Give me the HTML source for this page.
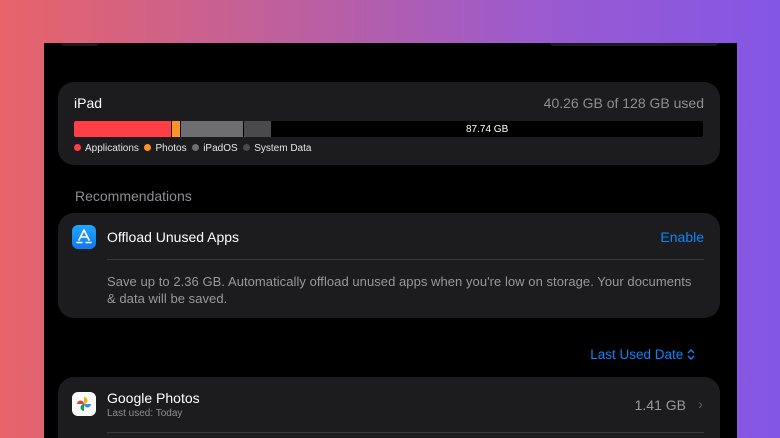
<!DOCTYPE html><html><head><style>
html,body{margin:0;width:780px;height:438px;overflow:hidden}
body{background:linear-gradient(90deg,#e8646a 0%,#c0609a 35%,#9a5ad0 70%,#8456e6 100%);font-family:"Liberation Sans",sans-serif;position:relative}
.p{position:absolute;left:44px;top:43px;width:693px;height:395px;background:#000;overflow:hidden}
.c{position:absolute;left:14px;width:662px;background:#1c1c1e;border-radius:16px}
.t{position:absolute;white-space:nowrap}
.dot{display:inline-block;width:7px;height:7px;border-radius:50%;margin-right:4px;vertical-align:-0px}
</style></head><body>
<div class="p">
<div style="position:absolute;left:16px;top:-6px;width:40px;height:9px;border-radius:8px;background:#1c1c1e"></div>
<div style="position:absolute;left:505px;top:-6px;width:170px;height:9px;border-radius:8px;background:#1c1c1e"></div>
<div class="c" style="top:39px;height:83px">
<div class="t" style="left:16px;top:13px;color:#fff;font-size:14px">iPad</div>
<div class="t" style="right:16px;top:13px;color:#8e8e93;font-size:14px">40.26 GB of 128 GB used</div>
<div style="position:absolute;left:16px;top:39px;width:629px;height:16px;background:#000;border-radius:2px;overflow:hidden">
<div style="position:absolute;left:0;width:97px;height:16px;background:#fe3f45"></div>
<div style="position:absolute;left:98px;width:8px;height:16px;background:#fe9426"></div>
<div style="position:absolute;left:107px;width:62px;height:16px;background:#6e6e71"></div>
<div style="position:absolute;left:170px;width:27px;height:16px;background:#4a4a4d"></div>
<div class="t" style="left:392px;top:3px;color:#fff;font-size:10px">87.74 GB</div>
</div>
<div class="t" style="left:16px;top:61px;color:#e5e5ea;font-size:10px"><span class="dot" style="background:#fe3f45"></span>Applications&nbsp; <span class="dot" style="background:#fe9426"></span>Photos&nbsp; <span class="dot" style="background:#6e6e71"></span>iPadOS&nbsp; <span class="dot" style="background:#4a4a4d"></span>System Data</div>
</div>
<div class="t" style="left:31px;top:145px;color:#8e8e93;font-size:14px">Recommendations</div>
<div class="c" style="top:170px;height:105px">
<div style="position:absolute;left:14px;top:12px;width:24px;height:24px;border-radius:6px;background:linear-gradient(#1ea7fd,#1477f0)"><svg width="24" height="24" viewBox="0 0 24 24"><path d="M12 5L7 15M12 5L17 15M9 12L15 12M5 17.5H10M14 17.5H19M12 5" stroke="#fff" stroke-width="1.6" fill="none" stroke-linecap="round"/></svg></div>
<div class="t" style="left:49px;top:16px;color:#fff;font-size:14px">Offload Unused Apps</div>
<div class="t" style="right:16px;top:16px;color:#0a84ff;font-size:14px">Enable</div>
<div style="position:absolute;left:49px;right:16px;top:46px;height:1px;background:#38383a"></div>
<div class="t" style="left:49px;top:60px;color:#98989d;font-size:13px;line-height:17px;white-space:normal;width:592px;letter-spacing:0.05px">Save up to 2.36 GB. Automatically offload unused apps when you're low on storage. Your documents &amp; data will be saved.</div>
</div>
<div class="t" style="right:42px;top:304px;color:#0a84ff;font-size:13.5px">Last Used Date <svg width="8" height="11" viewBox="0 0 8 11" style="vertical-align:-1px"><path d="M1 4L4 1L7 4M1 7L4 10L7 7" stroke="#0a84ff" stroke-width="1.4" fill="none"/></svg></div>
<div class="c" style="top:334px;height:80px">
<div style="position:absolute;left:14px;top:15px;width:24px;height:24px;border-radius:6px;background:#fff"><svg width="24" height="24" viewBox="0 0 24 24"><path d="M12 12V5A3.5 3.5 0 0 1 12 12Z" fill="#f4b400"/><path d="M12 12H19A3.5 3.5 0 0 1 12 12Z" fill="#4285f4"/><path d="M12 12V19A3.5 3.5 0 0 1 12 12Z" fill="#0f9d58"/><path d="M12 12H5A3.5 3.5 0 0 1 12 12Z" fill="#db4437"/></svg></div>
<div class="t" style="left:49px;top:13px;color:#fff;font-size:14px">Google Photos</div>
<div class="t" style="left:49px;top:31px;color:#8e8e93;font-size:10px">Last used: Today</div>
<div class="t" style="right:34px;top:20px;color:#98989d;font-size:14px">1.41 GB</div>
<div class="t" style="right:17px;top:19px;color:#5a5a5e;font-size:15px">›</div>
<div style="position:absolute;left:49px;right:16px;top:55px;height:1px;background:#38383a"></div>
</div>
</div>
</body></html>
